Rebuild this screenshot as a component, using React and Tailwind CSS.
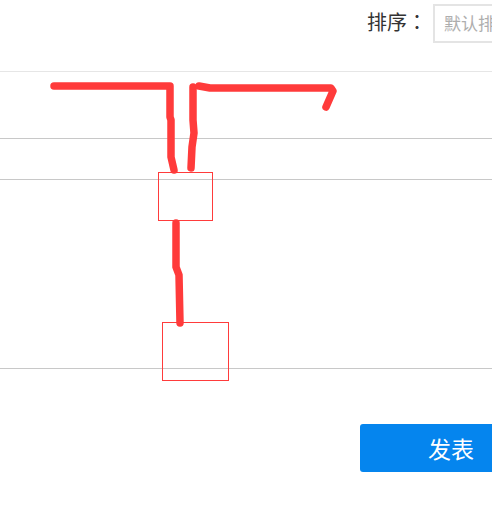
import React from "react";

const cjk = '"Liberation Sans", "Noto Sans CJK SC", sans-serif';

export default function App() {
  return (
    <div
      className="relative w-[492px] h-[521px] overflow-hidden bg-white"
      style={{ fontFamily: cjk }}
    >
      {/* toolbar */}
      <div className="h-[67px] pt-1 pl-[367px] flex items-start border-b border-[#e6e6e6] box-content">
        <span className="text-[20px] leading-[36px] text-[#333] w-[66px] shrink-0">
          排序<span style={{ fontFamily: '"Noto Sans CJK TC", sans-serif' }}>：</span>
        </span>
        <div className="w-[140px] h-[39px] shrink-0 border-2 border-[#e4e4e4] pl-[9px] text-[17px] leading-[38px] text-[#aeaeae]">
          默认排序
        </div>
      </div>

      {/* rows */}
      <div className="h-[66px] border-b border-[#c8c8c8] box-content" />
      <div className="h-[40px] border-b border-[#c8c8c8] box-content" />
      <div className="h-[188px] border-b border-[#c8c8c8] box-content" />

      {/* publish */}
      <div className="pt-[55px] pl-[360px]">
        <button className="w-[140px] h-[48px] rounded-[3px] bg-[#0585ee] text-white text-[23px] pl-[68px] pt-[4px] text-left">
          发表
        </button>
      </div>

      {/* hand-drawn annotation on top */}
      <div className="absolute left-[158px] top-[172px] w-[55px] h-[49px] border border-[#ff3b3b]" />
      <div className="absolute left-[162px] top-[322px] w-[67px] h-[59px] border border-[#ff3b3b]" />
      <svg className="absolute left-0 top-0" width="492" height="521" fill="none">
        <g stroke="#ff3b3b" strokeWidth="7.5" strokeLinecap="round" strokeLinejoin="round">
          <path d="M54 86 L170 86 L170 117 L171 120 L171 157 L174 170" />
          <path d="M193 87 L193 120 L194 133 L192 147 L191 168" />
          <path d="M199 86 L210 88 L331 88 L333 91 L326 107" />
          <path d="M176 223 L176 267 L179 275 L180 323" />
        </g>
      </svg>
    </div>
  );
}
